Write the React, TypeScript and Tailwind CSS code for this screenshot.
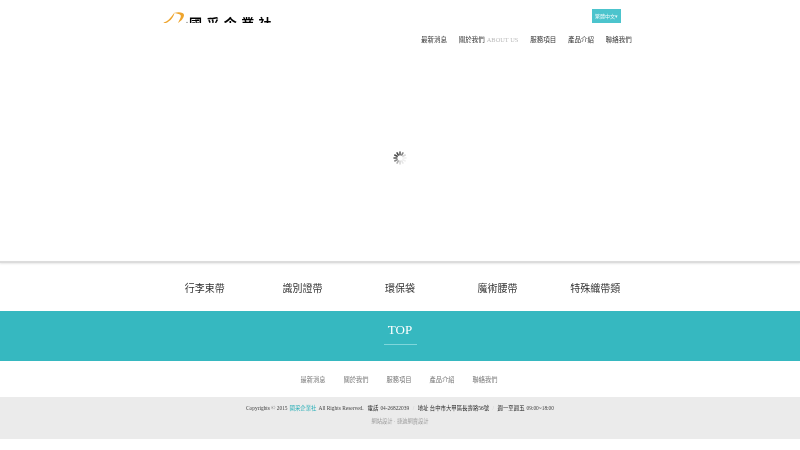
const topNav = [
  { label: '最新消息' },
  { label: '關於我們', sub: 'ABOUT US' },
  { label: '服務項目' },
  { label: '產品介紹' },
  { label: '聯絡我們' },
];

const products = ['行李束帶', '識別證帶', '環保袋', '魔術腰帶', '特殊織帶類'];
const footerNav = ['最新消息', '關於我們', '服務項目', '產品介紹', '聯絡我們'];

const cjk = "font-['Liberation_Sans','Noto_Sans_CJK_TC',sans-serif]";
const serif = "font-['Liberation_Serif','Noto_Sans_CJK_TC',serif]";

function Spinner() {
  const bars = [0.8, 0.6, 0.2, 0.08, 0.08, 0.12, 0.2, 0.4, 0.6, 0.8, 0.9, 0.9];
  return (
    <svg width="14" height="14" viewBox="0 0 16 16" aria-label="載入中">
      {bars.map((o, i) => (
        <rect
          key={i}
          x="7.1"
          y="0.5"
          width="1.8"
          height="4.5"
          fill="#333"
          opacity={o}
          transform={`rotate(${i * 30} 8 8)`}
        />
      ))}
    </svg>
  );
}

export default function App() {
  return (
    <div className={`w-[800px] h-[450px] overflow-hidden bg-white blur-[0.5px] ${cjk}`}>
      <header className="h-[50px] pl-[163px] pr-[179px] relative">
        <div className="flex justify-between items-start">
          {/* the logo is cut off at the bottom in the page too */}
          <div className="flex items-start h-[23px] overflow-hidden">
            <svg width="26" height="12" viewBox="0 0 26 12" className="shrink-0 mt-[12px]">
              <path d="M0.5 10.5 C5 9.5 8 5.5 11.5 0.5 C11 5 7 10 1.5 11.5 Z" fill="#eea42c" />
              <path d="M11 1 C15 -0.5 21 0 21 3 C21 6 18 9 15 11 C17 7 18.5 5 17.5 3 C16.5 1.5 13 1.5 11 1 Z" fill="#eea42c" />
              <circle cx="24" cy="10.5" r="0.7" fill="#888" />
            </svg>
            <span className="text-[13px] leading-[13px] tracking-[4.4px] font-bold text-black h-[13px] mt-[17px] whitespace-nowrap">
              國采企業社
            </span>
          </div>
          <button className="mt-[9px] w-[29px] h-[14px] bg-[#4cc4cd] text-[#e8f8f9] text-[5px] leading-[14px] text-center whitespace-nowrap">
            繁體中文▾
          </button>
        </div>
        <nav className="absolute top-[35px] left-[421px] flex gap-[11.75px] text-[6.5px] leading-[9px] text-[#333] whitespace-nowrap">
          {topNav.map((item) => (
            <span key={item.label} className="flex">
              {item.label}
              {item.sub && (
                <span className={`${serif} ml-[2px] text-[#bbb] text-[6.4px]`}>{item.sub}</span>
              )}
            </span>
          ))}
        </nav>
      </header>

      <main className="h-[211px] flex justify-center pt-[101px]">
        <Spinner />
      </main>

      <div className="h-[2px] bg-[#dcdcdc] shadow-[0_1px_2px_rgba(0,0,0,0.1)]" />

      <section className="h-[48px] pt-[2px] px-[156px] grid grid-cols-5 items-center">
        {products.map((name) => (
          <div key={name} className="text-center text-[10px] text-[#333]">
            {name}
          </div>
        ))}
      </section>

      <section className="h-[50px] bg-[#36b8c0] flex flex-col items-center pt-[11px]">
        <div className={`${serif} text-[13px] leading-[16px] text-white`}>TOP</div>
        <div className="w-[33px] h-px bg-[#7fd6db] mt-[6px]" />
      </section>

      <nav className="h-[36px] pt-[2px] pr-[2px] flex items-center justify-center gap-[18px] text-[6.25px] text-[#777]">
        {footerNav.map((label) => (
          <span key={label}>{label}</span>
        ))}
      </nav>

      <footer className="h-[42px] bg-[#ebebeb] flex flex-col items-center pt-[7px] text-[5.25px] leading-[8px]">
        <div className={`${serif} text-[#444] text-[5.4px] whitespace-nowrap flex items-center`}>
          <span>Copyrights © 2015</span>
          <span className="text-[#2cb0b8] ml-[2px]">國采企業社</span>
          <span className="ml-[2px]">All Rights Reserved.</span>
          <span className="ml-[4px] text-[#222]">電話</span>
          <span className="ml-[2px]">04-26822039</span>
          <span className="mx-[3.5px] text-[#ccc]">/</span>
          <span className="text-[#222]">地址 台中市大甲區長壽路56號</span>
          <span className="mx-[3.5px] text-[#ccc]">/</span>
          <span className="text-[#222]">週一至週五</span>
          <span className="ml-[2px]">09:00~18:00</span>
        </div>
        <div className="text-[#999] mt-[5px] whitespace-nowrap">網站設計 · 捷迪網賣設計</div>
      </footer>
    </div>
  );
}
